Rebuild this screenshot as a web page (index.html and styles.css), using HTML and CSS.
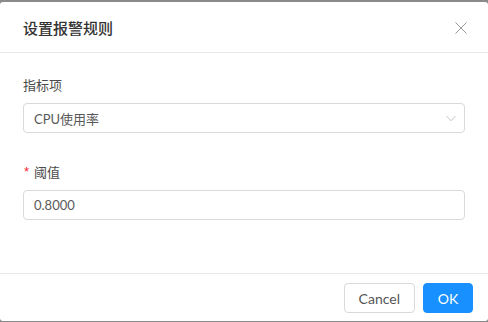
FILE: index.html
```html
<!DOCTYPE html>
<html lang="zh">
<head>
<meta charset="utf-8">
<link rel="stylesheet" href="styles.css">
</head>
<body>
<div class="modal">
  <div class="modal-header">
    <div class="modal-title">设置报警规则</div>
    <button class="modal-close" aria-label="Close">
      <svg width="12" height="12" viewBox="0 0 12 12"><path d="M0.5 0.5L11.5 11.5M11.5 0.5L0.5 11.5" stroke="#999" stroke-width="1" fill="none"/></svg>
    </button>
  </div>
  <div class="modal-body">
    <div class="form-item">
      <label class="form-label">指标项</label>
      <div class="select">
        <span class="select-value">CPU使用率</span>
        <svg class="select-arrow" width="10" height="7" viewBox="0 0 10 7"><path d="M0.5 1L5 5.8L9.5 1" stroke="#c4c4c4" stroke-width="1" fill="none"/></svg>
      </div>
    </div>
    <div class="form-item second">
      <label class="form-label"><span class="req">*</span>阈值</label>
      <div class="input">0.8000</div>
    </div>
  </div>
  <div class="modal-footer">
    <button class="btn">Cancel</button>
    <button class="btn btn-primary">OK</button>
  </div>
</div>
</body>
</html>
```
FILE: styles.css
```css
* { box-sizing: border-box; }
html, body { margin: 0; padding: 0; }
body {
  width: 488px;
  height: 322px;
  overflow: hidden;
  background: #8a8a8a;
  font-family: "Lato", "Noto Sans CJK SC", sans-serif;
}
.modal {
  margin-top: 2px;
  height: 319px;
  background: #fff;
  border-radius: 3px;
  display: flex;
  flex-direction: column;
}
.modal-header {
  height: 51px;
  padding: 0 21px 0 23px;
  border-bottom: 1px solid #e8e8e8;
  display: flex;
  align-items: center;
  justify-content: space-between;
}
.modal-title {
  font-family: "Noto Sans CJK SC", sans-serif;
  font-size: 15px;
  font-weight: 500;
  color: #333;
  line-height: 22px;
  margin-top: 1px;
}
.modal-close {
  border: 0;
  background: none;
  padding: 0;
  width: 12px;
  height: 12px;
  display: flex;
  margin-top: 1px;
}
.modal-body {
  flex: 1;
  padding: 21px 23px 0;
}
.form-item {
  display: flex;
  flex-direction: column;
  gap: 7px;
}
.form-item.second { margin-top: 28px; }
.form-label {
  font-family: "Noto Sans CJK SC", sans-serif;
  font-size: 13px;
  line-height: 22px;
  color: #4a4a4a;
  display: flex;
  align-items: center;
}
.req {
  color: #f5222d;
  font-family: "Liberation Sans", sans-serif;
  font-size: 13px;
  width: 11px;
  padding-left: 1px;
}
.select, .input {
  height: 30px;
  border: 1px solid #d9d9d9;
  border-radius: 4px;
  padding: 0 10px;
  display: flex;
  align-items: center;
  font-size: 13px;
  color: #595959;
}
.select { justify-content: space-between; }
.select-value { font-family: "Lato", "Noto Sans CJK SC", sans-serif; }
.select-arrow { margin-right: -2px; }
.modal-footer {
  height: 48px;
  border-top: 1px solid #e8e8e8;
  display: flex;
  justify-content: flex-end;
  align-items: flex-start;
  padding: 9px 15px 0;
  gap: 8px;
}
.btn {
  height: 30px;
  padding: 0 14px;
  border: 1px solid #d9d9d9;
  border-radius: 4px;
  background: #fff;
  color: #555;
  font-family: "Lato", sans-serif;
  font-size: 14px;
}
.btn-primary {
  background: #1890ff;
  border-color: #1890ff;
  color: #fff;
  width: 50px;
  padding: 0;
}
```
